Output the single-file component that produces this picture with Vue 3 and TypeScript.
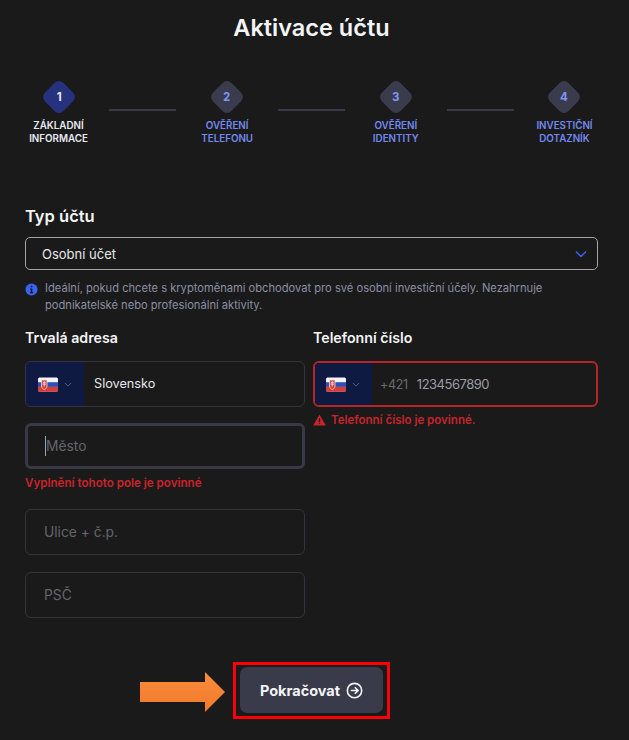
<script setup lang="ts">
const steps = [
  { id: 1, lines: ['Základní', 'informace'], active: true },
  { id: 2, lines: ['Ověření', 'telefonu'], active: false },
  { id: 3, lines: ['Ověření', 'identity'], active: false },
  { id: 4, lines: ['Investiční', 'dotazník'], active: false },
];
</script>

<template>
  <main class="page">
    <h1 class="title">Aktivace účtu</h1>

    <ol class="steps">
      <template v-for="(step, i) in steps" :key="step.id">
        <li v-if="i > 0" class="steps__line"></li>
        <li :class="['step', { 'step--active': step.active }]">
          <span class="step__mark"><span class="step__num">{{ step.id }}</span></span>
          <span class="step__label">{{ step.lines[0] }}<br />{{ step.lines[1] }}</span>
        </li>
      </template>
    </ol>

    <section class="account">
      <h2 class="heading heading--large">Typ účtu</h2>
      <div class="select">
        <span>Osobní účet</span>
        <svg class="select__chevron" viewBox="0 0 12 8" fill="none" stroke="currentColor" stroke-width="1.5">
          <path d="M1 1.5l5 5 5-5" />
        </svg>
      </div>
      <div class="hint">
        <svg class="hint__icon" viewBox="0 0 14 14">
          <circle cx="7" cy="7" r="6.5" fill="#3a62f0" />
          <rect x="6.2" y="3" width="1.7" height="1.7" fill="#14182a" />
          <path d="M5.5 6h2.4v3.6h.8V11H5.4V9.6h.9V7.2h-.8z" fill="#14182a" />
        </svg>
        <p>Ideální, pokud chcete s kryptoměnami obchodovat pro své osobní investiční účely. Nezahrnuje podnikatelské nebo profesionální aktivity.</p>
      </div>
    </section>

    <section class="columns">
      <div class="column">
        <h2 class="heading">Trvalá adresa</h2>
        <div class="field field--flag">
          <div class="flag-box">
            <svg class="flag" viewBox="0 0 20 14">
              <rect width="20" height="14" rx="1.5" fill="#f4f4f6" />
              <rect y="4.7" width="20" height="4.7" fill="#2a52b8" />
              <path d="M0 9.4h20v3.1a1.5 1.5 0 0 1-1.5 1.5h-17A1.5 1.5 0 0 1 0 12.500z" fill="#e0392f" />
              <path d="M3.500 2.500h5.500v6c0 2-1.500 3-2.750 3.500-1.250-.5-2.750-1.500-2.750-3.500z" fill="#e0392f" stroke="#f4f4f6" stroke-width=".7" />
              <path d="M6.250 3.600v5.400M4.900 5h2.700M4.500 6.600h3.500" stroke="#f4f4f6" stroke-width=".8" fill="none" />
            </svg>
            <svg class="flag-box__chevron" viewBox="0 0 10 6" fill="none" stroke="currentColor" stroke-width="1.2">
              <path d="M1 1l4 4 4-4" />
            </svg>
          </div>
          <span class="field__value">Slovensko</span>
        </div>

        <div class="field field--focus">
          <span class="caret"></span>
          <span class="field__placeholder">Město</span>
        </div>
        <p class="error error--plain">Vyplnění tohoto pole je povinné</p>

        <div class="field field--street"><span class="field__placeholder">Ulice + č.p.</span></div>
        <div class="field field--zip"><span class="field__placeholder">PSČ</span></div>
      </div>

      <div class="column">
        <h2 class="heading">Telefonní číslo</h2>
        <div class="field field--flag field--invalid">
          <div class="flag-box">
            <svg class="flag" viewBox="0 0 20 14">
              <rect width="20" height="14" rx="1.5" fill="#f4f4f6" />
              <rect y="4.7" width="20" height="4.7" fill="#2a52b8" />
              <path d="M0 9.4h20v3.1a1.5 1.5 0 0 1-1.5 1.5h-17A1.5 1.5 0 0 1 0 12.500z" fill="#e0392f" />
              <path d="M3.500 2.500h5.500v6c0 2-1.500 3-2.750 3.500-1.250-.5-2.750-1.500-2.750-3.500z" fill="#e0392f" stroke="#f4f4f6" stroke-width=".7" />
              <path d="M6.250 3.600v5.400M4.900 5h2.700M4.500 6.600h3.500" stroke="#f4f4f6" stroke-width=".8" fill="none" />
            </svg>
            <svg class="flag-box__chevron" viewBox="0 0 10 6" fill="none" stroke="currentColor" stroke-width="1.2">
              <path d="M1 1l4 4 4-4" />
            </svg>
          </div>
          <span class="field__prefix">+421</span>
          <span class="field__phone">1234567890</span>
        </div>
        <p class="error">
          <svg class="error__icon" viewBox="0 0 14 13">
            <path d="M7 .5L13.800 12.500H.2z" fill="#c9242b" />
            <rect x="6.300" y="4.500" width="1.400" height="4" fill="#1a1a1a" />
            <rect x="6.300" y="9.400" width="1.400" height="1.400" fill="#1a1a1a" />
          </svg>
          Telefonní číslo je povinné.
        </p>
      </div>
    </section>

    <footer class="actions">
      <svg class="arrow" viewBox="0 0 85 40">
        <defs>
          <linearGradient id="arrow-fill" x1="0" y1="0" x2="0" y2="1">
            <stop offset="0" stop-color="#f98e3c" />
            <stop offset="1" stop-color="#f2782a" />
          </linearGradient>
        </defs>
        <path d="M0 10h65V0l20 20-20 20V30H0z" fill="url(#arrow-fill)" />
      </svg>
      <div class="highlight">
        <button class="next" type="button">
          Pokračovat
          <svg class="next__icon" viewBox="0 0 18 18" fill="none" stroke="currentColor" stroke-width="1.7">
            <circle cx="9" cy="9" r="7.600" />
            <path d="M5 9h7.500M9.300 5.500L12.800 9l-3.500 3.500" />
          </svg>
        </button>
      </div>
    </footer>
  </main>
</template>

<style scoped>
.page {
  box-sizing: border-box;
  width: 629px;
  height: 740px;
  overflow: hidden;
  padding: 0 31px 0 25px;
  background: #1a1a1a;
  color: #f3f4f6;
  font-family: Inter, "Noto Sans", sans-serif;
}

.title {
  margin: 0;
  padding-top: 13px;
  font-size: 23.500px;
  line-height: 29px;
  font-weight: 600;
  text-align: center;
  color: #f3f4f6;
}

.steps {
  display: flex;
  gap: 17.3px;
  margin: 38px 0 0;
  padding: 0;
  list-style: none;
}

.step {
  flex: 1 1 0;
  display: flex;
  flex-direction: column;
  align-items: center;
  min-width: 0;
}

.steps__line {
  flex: 1 1 0;
  height: 2px;
  margin-top: 29px;
  background: #3a3b4a;
}

.step__mark {
  display: flex;
  align-items: center;
  justify-content: center;
  width: 26px;
  height: 26px;
  margin: 4px 0;
  border-radius: 6px;
  background: #3a3b4c;
  transform: rotate(45deg);
}

.step__num {
  font-size: 11.500px;
  font-weight: 700;
  color: #8096f5;
  transform: rotate(-45deg);
}

.step__label {
  margin-top: 5px;
  font-size: 9.800px;
  line-height: 13px;
  font-weight: 600;
  text-align: center;
  text-transform: uppercase;
  white-space: nowrap;
  color: #7489f0;
}

.step--active .step__mark {
  background: #27327f;
}

.step--active .step__num,
.step--active .step__label {
  color: #e8eaf2;
}

.account {
  margin-top: 62px;
}

.heading {
  margin: 0 0 14px;
  font-size: 14.200px;
  line-height: 18px;
  font-weight: 600;
  color: #f3f4f6;
}

.heading--large {
  margin-bottom: 12px;
  font-size: 16.500px;
}

.select {
  box-sizing: border-box;
  display: flex;
  align-items: center;
  justify-content: space-between;
  width: 573px;
  height: 33px;
  padding: 0 10px 0 16px;
  border: 1px solid #a3a3a3;
  border-radius: 5px;
  font-size: 13px;
  color: #e5e7eb;
}

.select__chevron {
  width: 12px;
  height: 8px;
  color: #3a62f0;
}

.hint {
  display: flex;
  gap: 7px;
  margin-top: 10px;
}

.hint__icon {
  flex: none;
  width: 13px;
  height: 13px;
  margin-top: 3px;
}

.hint p {
  margin: 0;
  font-size: 11.150px;
  line-height: 17px;
  color: #8c8fa3;
}

.columns {
  display: flex;
  gap: 8px;
  margin-top: 15px;
}

.column {
  display: flex;
  flex-direction: column;
}

.column:first-child {
  width: 280px;
}

.column:last-child {
  width: 285px;
}

.field {
  box-sizing: border-box;
  display: flex;
  align-items: center;
  flex: none;
  height: 46px;
  padding: 0 18px;
  border: 1px solid #33343f;
  border-radius: 6px;
  font-size: 14px;
}

.field--flag {
  padding: 0;
  overflow: hidden;
}

.flag-box {
  display: flex;
  align-items: center;
  gap: 6px;
  flex: none;
  align-self: stretch;
  width: 58px;
  padding-left: 12px;
  box-sizing: border-box;
  background: #0e1a41;
}

.flag {
  width: 20px;
  height: 15px;
}

.flag-box__chevron {
  width: 8px;
  height: 5px;
  color: #596078;
}

.field__value {
  margin-left: 10px;
  padding-bottom: 2px;
  font-size: 12.700px;
  color: #e5e7eb;
}

.field--focus {
  margin-top: 16px;
  border: 3px solid #383947;
  padding-left: 17px;
}

.caret {
  width: 1px;
  height: 20px;
  background: #a0a0a8;
}

.field__placeholder {
  font-size: 13.800px;
  color: #64656d;
}

.field--street {
  margin-top: 18px;
}

.field--zip {
  margin-top: 17px;
}

.field--invalid {
  border: 2px solid #b7252b;
}

.field--invalid .flag-box {
  width: 57px;
  padding-left: 11px;
}

.field__prefix {
  margin-left: 8px;
  font-size: 12.500px;
  letter-spacing: -0.3px;
  color: #68696f;
}

.field__phone {
  margin-left: 9px;
  font-size: 13px;
  letter-spacing: -0.5px;
  color: #9a9ca6;
}

.error {
  display: flex;
  align-items: center;
  gap: 5px;
  margin: 5px 0 0;
  font-size: 11.500px;
  line-height: 16px;
  font-weight: 600;
  color: #c9242b;
}

.error--plain {
  margin-top: 6px;
  margin-bottom: 0;
  font-size: 11.600px;
}

.error__icon {
  width: 13px;
  height: 12px;
}

.actions {
  display: flex;
  align-items: center;
  margin-top: 44px;
  padding-left: 115px;
  gap: 8px;
}

.arrow {
  flex: none;
  width: 85px;
  height: 40px;
  margin-top: 3px;
}

.highlight {
  flex: none;
  padding: 2px 4px 3px;
  border: 3px solid #fb0007;
}

.next {
  display: flex;
  align-items: center;
  justify-content: center;
  gap: 6px;
  width: 143px;
  height: 46px;
  border: 0;
  border-radius: 7px;
  background: #393a4a;
  color: #f3f4f6;
  font-family: inherit;
  font-size: 14.500px;
  font-weight: 700;
}

.next__icon {
  width: 17px;
  height: 17px;
}
</style>
